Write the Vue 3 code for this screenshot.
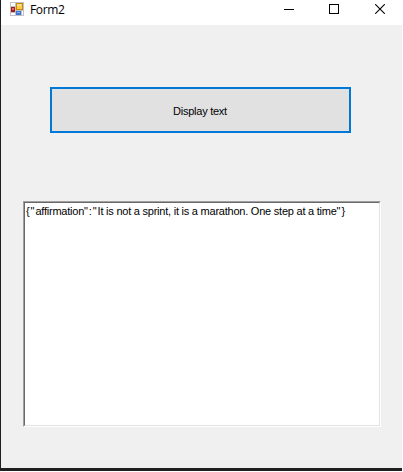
<script setup>
import { computed, ref } from 'vue'

const title = 'Form2'
const response = ref('{"affirmation":"It is not a sprint, it is a marathon. One step at a time"}')

// JSON punctuation is set slightly wider than the words around it.
const segments = computed(() =>
  response.value
    .split(/([{}":]+)/)
    .filter(Boolean)
    .map((text) => ({ text, mark: /^[{}":]/.test(text) }))
)
</script>

<template>
  <div class="desktop">
    <main class="window">
      <header class="titlebar">
        <svg class="app-icon" width="14" height="14" viewBox="0 0 14 14" shape-rendering="crispEdges">
          <rect width="14" height="14" fill="#c0c2c6" />
          <rect x="1" y="1" width="4" height="3" fill="#fff" />
          <rect x="1" y="11" width="4" height="2" fill="#fff" />
          <rect x="12" y="9" width="1" height="4" fill="#fff" />
          <rect x="6" y="1" width="7" height="7" fill="#c48a0c" />
          <rect x="7" y="2" width="5" height="5" fill="#fbcb48" />
          <rect x="7" y="2" width="4" height="2" fill="#fde087" />
          <rect x="1" y="5" width="4" height="5" fill="#a51a12" />
          <rect x="2" y="6" width="2" height="2" fill="#e07055" />
          <rect x="6" y="9" width="5" height="4" fill="#3f73d2" />
          <rect x="7" y="10" width="3" height="1" fill="#8fb4f3" />
        </svg>
        <h1 class="title">{{ title }}</h1>
        <div class="controls">
          <svg width="10" height="10" viewBox="0 0 10 10" shape-rendering="crispEdges">
            <rect y="5" width="10" height="1" />
          </svg>
          <svg width="10" height="10" viewBox="0 0 10 10">
            <rect x=".5" y=".5" width="9" height="9" fill="none" stroke="#000" />
          </svg>
          <svg class="close" width="10" height="10" viewBox="0 0 10 10">
            <path d="M.2.2l9.6 9.6M9.8.2L.2 9.8" fill="none" stroke="#000" stroke-width="1.1" />
          </svg>
        </div>
      </header>
      <section class="client">
        <button class="display-button"><span>Display text</span></button>
        <div class="textbox">
          <div class="textbox-inner"><span v-for="(segment, i) in segments" :key="i" :class="{ mark: segment.mark }">{{ segment.text }}</span></div>
        </div>
      </section>
    </main>
  </div>
</template>

<style>
body {
  margin: 0;
  background: #fff;
}
</style>

<style scoped>
.desktop {
  box-sizing: border-box;
  width: 402px;
  height: 471px;
  padding: 0 0 3px 1px;
  background: #1f1f1f;
}
.window {
  display: flex;
  flex-direction: column;
  height: 468px;
  background: #f0f0f0;
  color: #000;
}
.titlebar {
  display: flex;
  box-sizing: border-box;
  height: 25px;
  padding: 2px 17px 0 9px;
  background: #fff;
}
.app-icon {
  flex: none;
}
.title {
  margin: 0 0 0 6px;
  font: 400 12px/16px "Open Sans", "Noto Sans", sans-serif;
  letter-spacing: -0.35px;
}
.controls {
  display: flex;
  gap: 35px;
  margin-left: auto;
  padding-top: 2px;
}
.controls .close {
  margin-left: 1px;
}
.client {
  display: flex;
  flex-direction: column;
  align-items: flex-start;
  padding: 62px 0 0 22px;
}
.display-button {
  box-sizing: border-box;
  width: 301px;
  height: 46px;
  margin: 0 0 68px 27px;
  padding: 2px 1px 0 0;
  border: 2px solid #0078d7;
  border-radius: 0;
  background: #e1e1e1;
  color: #000;
  font: 11px/14px "Liberation Sans", Arial, sans-serif;
  letter-spacing: -0.25px;
}
.textbox {
  box-sizing: border-box;
  width: 358px;
  height: 226px;
  border: 1px solid;
  border-color: #a0a0a0 #fff #fff #a0a0a0;
}
.textbox-inner {
  box-sizing: border-box;
  height: 100%;
  padding: 1px 0 0 1px;
  border: 1px solid;
  border-color: #696969 #e3e3e3 #e3e3e3 #696969;
  background: #fff;
  font: 11px/14px "Liberation Sans", Arial, sans-serif;
  letter-spacing: -0.23px;
  white-space: nowrap;
}
.mark {
  letter-spacing: 0.9px;
}
</style>
